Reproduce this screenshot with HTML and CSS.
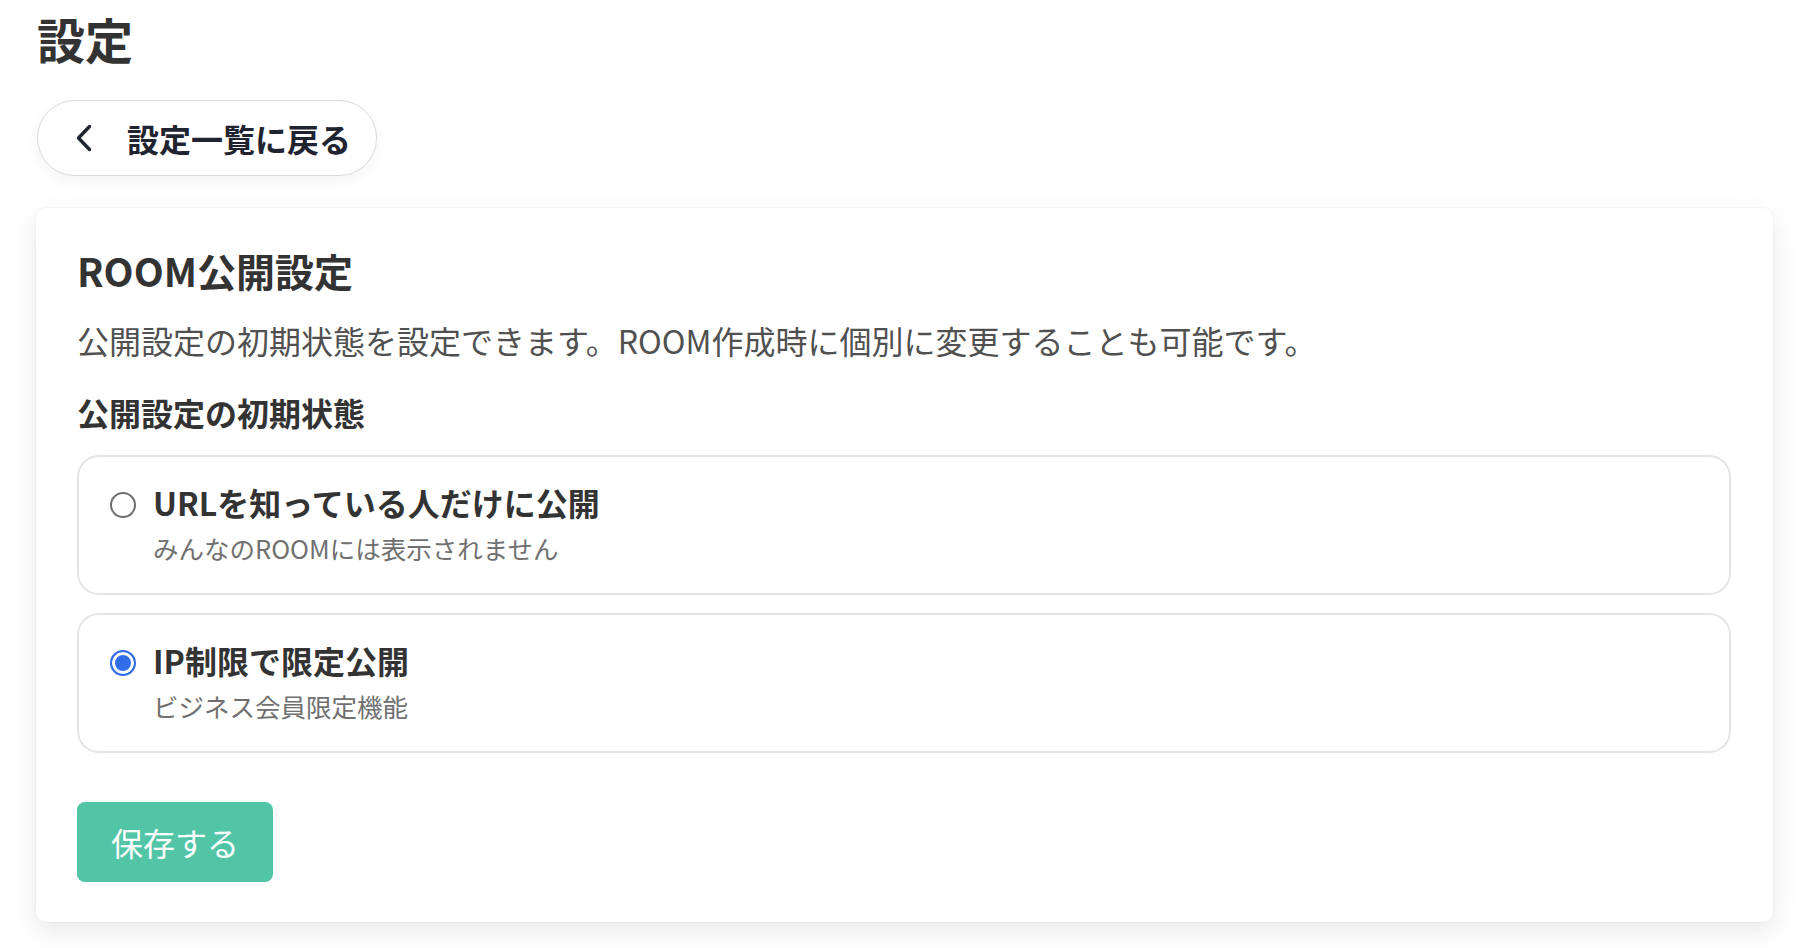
FILE: index.html
```html
<!DOCTYPE html>
<html lang="ja">
<head>
<meta charset="utf-8">
<title>設定</title>
<link rel="stylesheet" href="styles.css">
</head>
<body>
<div class="page">
  <h1 class="page-title">設定</h1>
  <button class="back-btn" type="button">
    <svg class="chev" width="16" height="28" viewBox="0 0 16 28" aria-hidden="true"><polyline points="13.5,2.5 2.5,14 13.5,25.5" fill="none" stroke="#1f2430" stroke-width="3.4" stroke-linecap="round" stroke-linejoin="round"/></svg>
    <span>設定一覧に戻る</span>
  </button>
  <section class="card">
    <h2 class="card-title">ROOM公開設定</h2>
    <p class="card-desc">公開設定の初期状態を設定できます。ROOM作成時に個別に変更することも可能です。</p>
    <div class="field-label">公開設定の初期状態</div>
    <div class="options">
      <label class="option">
        <input class="radio" type="radio" name="vis" value="url">
        <span class="opt-title">URLを知っている人だけに公開</span>
        <span class="opt-sub">みんなのROOMには表示されません</span>
      </label>
      <label class="option">
        <input class="radio" type="radio" name="vis" value="ip" checked>
        <span class="opt-title">IP制限で限定公開</span>
        <span class="opt-sub">ビジネス会員限定機能</span>
      </label>
    </div>
    <button class="save-btn" type="button">保存する</button>
  </section>
</div>
</body>
</html>
```

FILE: styles.css
```css
* { box-sizing: border-box; }
html, body { margin: 0; padding: 0; background: #ffffff; }
body {
  font-family: "Noto Sans CJK JP", "Noto Sans", sans-serif;
  color: #333333;
}
.page {
  min-height: 948px;
  padding: 6px 37px 27px 36px;
}
.page-title {
  margin: 0;
  font-size: 48px;
  line-height: 64px;
  font-weight: 700;
  color: #333333;
  padding-left: 1px;
}
.back-btn {
  display: inline-flex;
  align-items: center;
  gap: 35px;
  margin: 30px 0 0 1px;
  height: 76px;
  padding: 0 25px 0 38px;
  border: 1.5px solid #d9d9df;
  border-radius: 38px;
  background: #ffffff;
  box-shadow: 0 5px 14px rgba(0, 0, 0, 0.05);
  font-family: inherit;
  font-size: 32px;
  font-weight: 700;
  line-height: 48px;
  color: #1f2430;
  cursor: pointer;
}
.chev { display: block; flex: none; }
.card {
  margin-top: 32px;
  background: #ffffff;
  border-radius: 10px;
  box-shadow: 0 0 0 1px rgba(0, 0, 0, 0.025), 0 10px 28px rgba(0, 0, 0, 0.09);
  padding: 34px 42px 40px 41px;
}
.card-title {
  margin: 0;
  font-size: 39px;
  line-height: 56px;
  font-weight: 700;
  color: #333333;
}
.card-desc {
  margin: 18px 0 0;
  font-size: 32px;
  line-height: 48px;
  font-weight: 400;
  color: #505050;
}
.field-label {
  margin-top: 24px;
  font-size: 32px;
  line-height: 48px;
  font-weight: 700;
  color: #333333;
}
.options {
  margin-top: 19px;
  display: flex;
  flex-direction: column;
  gap: 18px;
}
.option {
  display: grid;
  grid-template-columns: 26px 1fr;
  column-gap: 17px;
  align-items: start;
  align-content: start;
  height: 140px;
  padding: 23px 30px 0 31px;
  border: 2px solid #e4e4e4;
  border-radius: 22px;
  background: #ffffff;
  cursor: pointer;
}
.radio {
  -webkit-appearance: none;
  appearance: none;
  grid-row: 1;
  grid-column: 1;
  width: 26px;
  height: 26px;
  margin: 12px 0 0;
  border: 2px solid #6e6e6e;
  border-radius: 50%;
  background: #ffffff;
}
.radio:checked {
  border-color: #2f6de9;
  background: #2f6de9;
  box-shadow: inset 0 0 0 3px #ffffff;
}
.opt-title {
  grid-row: 1;
  grid-column: 2;
  font-size: 32px;
  line-height: 44px;
  font-weight: 700;
  color: #333333;
}
.opt-sub {
  grid-row: 2;
  grid-column: 2;
  margin-top: 6px;
  font-size: 25.5px;
  line-height: 36px;
  font-weight: 400;
  color: #707070;
}
.save-btn {
  display: block;
  margin-top: 49px;
  height: 80px;
  padding: 0 34px;
  border: none;
  border-radius: 8px;
  background: #52c5a7;
  color: #ffffff;
  font-family: inherit;
  font-size: 32px;
  line-height: 80px;
  font-weight: 400;
  cursor: pointer;
}
```
